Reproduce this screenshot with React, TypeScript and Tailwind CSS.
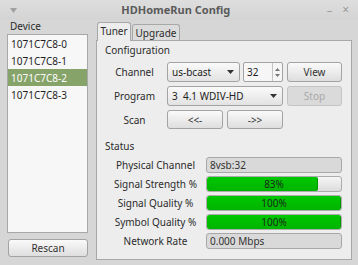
import React from "react";

const devices = ["1071C7C8-0", "1071C7C8-1", "1071C7C8-2", "1071C7C8-3"];

const statusRows: Array<{ label: string; kind: "text" | "bar"; value: string; pct?: number }> = [
  { label: "Physical Channel", kind: "text", value: "8vsb:32" },
  { label: "Signal Strength %", kind: "bar", value: "83%", pct: 83 },
  { label: "Signal Quality %", kind: "bar", value: "100%", pct: 100 },
  { label: "Symbol Quality %", kind: "bar", value: "100%", pct: 100 },
  { label: "Network Rate", kind: "text", value: "0.000 Mbps" },
];

function Button({ children, className = "", disabled = false }: { children: React.ReactNode; className?: string; disabled?: boolean }) {
  return (
    <div
      className={`flex items-center justify-center rounded-[3px] border ${
        disabled
          ? "border-[#c4c4c4] bg-[#dadada] text-[#a9a9a9]"
          : "border-[#a3a3a3] bg-gradient-to-b from-[#fafafa] to-[#dedede] text-[#333]"
      } ${className}`}
    >
      {children}
    </div>
  );
}

function Combo({ value, className = "" }: { value: string; className?: string }) {
  return (
    <div className={`flex items-center rounded-[3px] border border-[#a3a3a3] bg-gradient-to-b from-[#fafafa] to-[#e2e2e2] pl-[4px] pr-[5px] text-[#222] ${className}`}>
      <span className="flex-1 whitespace-pre">{value}</span>
      <svg width="7" height="4" viewBox="0 0 7 4">
        <path d="M0 0h7L3.5 4z" fill="#333" />
      </svg>
    </div>
  );
}

function Spin() {
  return (
    <div className="flex h-[20px] w-[40px] items-stretch rounded-[2px] border border-[#a3a3a3] bg-[#f6f6f6]">
      <span className="flex flex-1 items-center pl-[3px] text-[#222]">32</span>
      <div className="flex w-[10px] flex-col items-center justify-center gap-[3px] border-l border-[#c4c4c4]">
        <svg width="5" height="3" viewBox="0 0 5 3">
          <path d="M0 3h5L2.5 0z" fill="#777" />
        </svg>
        <svg width="5" height="3" viewBox="0 0 5 3">
          <path d="M0 0h5L2.5 3z" fill="#777" />
        </svg>
      </div>
    </div>
  );
}

export default function App() {
  return (
    <div className="flex h-[265px] w-[358px] flex-col overflow-hidden bg-[#d6d6d6] font-['Noto_Sans',sans-serif] text-[10px] leading-[12px] text-[#2b2b2b]">
      {/* title bar */}
      <div className="flex h-[20px] items-center bg-gradient-to-b from-[#dedede] to-[#d4d4d4] px-[9px] text-[#999]">
        <svg width="7" height="5" viewBox="0 0 7 5" className="ml-[1px]">
          <path d="M0 0h7L3.5 5z" fill="#a0a0a0" />
        </svg>
        <span className="flex-1 pl-[8px] text-center text-[11px] font-bold text-[#5a5a5a]">HDHomeRun Config</span>
        <span className="mr-[10px] text-[11px]">–</span>
        <span className="text-[12px]">×</span>
      </div>

      <div className="flex flex-1">
        {/* device list */}
        <div className="flex w-[96px] flex-col pl-[7px] pr-[8px]">
          <p className="pl-[3px]">Device</p>
          <div className="mt-[2px] h-[199px] border border-[#a8a8a8] bg-[#f7f7f7]">
            {devices.map((d, i) => (
              <div key={d} className={`flex h-[17px] items-center pl-[3px] ${i === 2 ? "bg-[#86a36a] text-white" : "text-[#1e1e1e]"}`}>
                {d}
              </div>
            ))}
          </div>
          <Button className="ml-[1px] mt-[6px] h-[18px]">Rescan</Button>
        </div>

        {/* notebook */}
        <div className="flex w-[256px] flex-col pt-[2px]">
          <div className="flex h-[18px] items-end">
            <div className="relative z-10 -mb-px ml-[1px] flex h-[19px] w-[34px] items-start justify-center rounded-t-[3px] border border-b-0 border-[#a8a8a8] bg-[#ededed] pt-[2px]">
              Tuner
            </div>
            <div className="ml-[1px] flex h-[16px] w-[48px] items-center justify-center rounded-t-[3px] border border-b-0 border-[#a8a8a8] bg-[#dcdcdc]">
              Upgrade
            </div>
          </div>
          <div className="h-[220px] border border-[#a8a8a8] bg-[#ededed] pl-[8px] pt-[3px]">
            <p>Configuration</p>

            <div className="mt-[6px] flex flex-col gap-[4px]">
              <div className="flex h-[20px] items-center">
                <span className="w-[59px] text-center">Channel</span>
                <Combo value="us-bcast" className="ml-[3px] h-[20px] w-[73px]" />
                <div className="ml-[3px]">
                  <Spin />
                </div>
                <Button className="ml-[4px] h-[20px] w-[55px]">View</Button>
              </div>
              <div className="flex h-[20px] items-center">
                <span className="w-[59px] text-center">Program</span>
                <Combo value="3  4.1 WDIV-HD" className="ml-[3px] h-[20px] w-[116px]" />
                <Button disabled className="ml-[4px] h-[20px] w-[55px]">
                  Stop
                </Button>
              </div>
              <div className="flex h-[19px] items-center">
                <span className="w-[59px] text-center">Scan</span>
                <Button className="ml-[3px] h-[19px] w-[56px]">&lt;&lt;-</Button>
                <Button className="ml-[4px] h-[19px] w-[56px]">-&gt;&gt;</Button>
              </div>
            </div>

            <p className="mt-[11px]">Status</p>

            <div className="mt-[5px] flex flex-col gap-[3px]">
              {statusRows.map((r) => (
                <div key={r.label} className="flex h-[16px] items-center">
                  <span className="w-[101px] text-center">{r.label}</span>
                  {r.kind === "text" ? (
                    <div className="flex h-[16px] w-[136px] items-center rounded-[3px] border border-[#a8a8a8] bg-[#d9d9d9] pl-[3px] text-[#333]">
                      {r.value}
                    </div>
                  ) : (
                    <div className="relative h-[16px] w-[136px] overflow-hidden rounded-[3px] border border-[#acacac] bg-gradient-to-b from-[#f6f6f6] to-[#dcdcdc]">
                      <div className="h-full rounded-[2px] border-r border-[#009a00] bg-gradient-to-b from-[#00c800] to-[#00b400]" style={{ width: `${r.pct}%` }} />
                      <span className="absolute inset-0 flex items-center justify-center text-[#1a2a1a]">{r.value}</span>
                    </div>
                  )}
                </div>
              ))}
            </div>
          </div>
        </div>
      </div>
    </div>
  );
}
